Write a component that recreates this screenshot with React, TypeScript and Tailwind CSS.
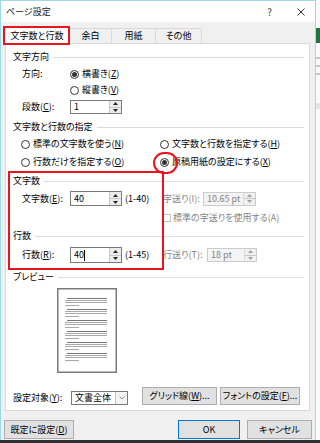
import React from "react";

const font = "font-['Noto_Sans_CJK_JP',sans-serif] [font-feature-settings:'palt']";

function Radio({ checked }: { checked?: boolean }) {
  return (
    <span className="w-[9px] h-[9px] rounded-full border border-[#333] bg-white flex items-center justify-center shrink-0">
      {checked && <span className="w-[5px] h-[5px] rounded-full bg-[#333]" />}
    </span>
  );
}

function Group({ label, className }: { label: string; className: string }) {
  return (
    <div className={className}>
      <span>{label}</span>
      <div className="flex-1 h-px bg-[#dcdcdc] ml-[4px]" />
    </div>
  );
}

function Spin({ disabled }: { disabled?: boolean }) {
  const c = disabled ? "#a0a0a0" : "#222";
  return (
    <div
      className={
        disabled
          ? "w-[12px] flex flex-col border-l border-[#dadada] bg-[#f0f0f0]"
          : "w-[12px] flex flex-col border-l border-[#c8c8c8] bg-[#ececec]"
      }
    >
      <div className="flex-1 flex items-center justify-center border-b border-[#c8c8c8]">
        <svg width="5" height="3" viewBox="0 0 5 3">
          <path d="M0 3 L2.5 0 L5 3 Z" fill={c} />
        </svg>
      </div>
      <div className="flex-1 flex items-center justify-center">
        <svg width="5" height="3" viewBox="0 0 5 3">
          <path d="M0 0 L2.5 3 L5 0 Z" fill={c} />
        </svg>
      </div>
    </div>
  );
}

function Input({ value, className, caret }: { value: string; className: string; caret?: boolean }) {
  return (
    <div className={"flex border border-[#7a7a7a] bg-white " + className}>
      <div className="flex-1 flex items-center pl-[3px]">
        {value}
        {caret && <span className="w-px h-[11px] bg-black" />}
      </div>
      <Spin />
    </div>
  );
}

function DisabledInput({ value, className }: { value: string; className: string }) {
  return (
    <div className={"flex border border-[#cccccc] bg-[#f4f4f4] text-[#838383] " + className}>
      <div className="flex-1 flex items-center pl-[3px]">{value}</div>
      <Spin disabled />
    </div>
  );
}

function PreviewPage() {
  const paras = [0, 1, 2, 3, 4, 5];
  return (
    <svg width="60" height="85" viewBox="0 0 60 85">
      <rect x="0.75" y="0.75" width="58.5" height="83.5" fill="#fff" stroke="#7a7a7a" strokeWidth="1.5" />
      {paras.map((i) => {
        const y = 10 + i * 11;
        return (
          <g key={i}>
            <rect x="10" y={y} width="40" height="1" fill="#777" />
            <rect x="8" y={y + 2} width="42" height="1" fill="#a8a8a8" />
            <rect x="8" y={y + 4} width="42" height="1" fill="#a8a8a8" />
            <rect x="8" y={y + 7} width="14" height="1" fill="#a8a8a8" />
          </g>
        );
      })}
    </svg>
  );
}

export default function App() {
  return (
    <div className={"w-[320px] h-[443px] flex flex-col overflow-hidden text-[9px] leading-[12px] text-black bg-white " + font}>
      <div className="flex h-[440px]">
        <div className="w-[316px] h-[440px] border-l border-t border-r border-[#9fd8e6] flex flex-col">
          {/* title bar */}
          <div className="h-[21px] bg-white flex items-center pl-[5px] shrink-0">
            <span className="text-[#222]">ページ設定</span>
            <span className="ml-auto text-[#444] text-[10px]">?</span>
            <svg className="ml-[25px] mr-[10px]" width="8" height="8" viewBox="0 0 8 8">
              <path d="M0.5 0.5 L7.5 7.5 M7.5 0.5 L0.5 7.5" stroke="#333" strokeWidth="1" />
            </svg>
          </div>

          {/* body */}
          <div className="flex-1 bg-[#f0f0f0] flex flex-col">
            {/* tabs */}
            <div className="relative flex items-end h-[17px] mt-[4px] pl-[3px]">
              <div className="relative z-10 w-[66px] h-[18px] -mb-px bg-white border-l border-t border-r border-[#d9d9d9] flex items-center justify-center">
                文字数と行数
              </div>
              <div className="w-[42px] h-[15px] border-t border-r border-[#d9d9d9] flex items-center justify-center">
                余白
              </div>
              <div className="w-[44px] h-[15px] border-t border-r border-[#d9d9d9] flex items-center justify-center">
                用紙
              </div>
              <div className="w-[46px] h-[15px] border-t border-r border-[#d9d9d9] flex items-center justify-center">
                その他
              </div>
              <div className="absolute left-[2px] top-0 w-[67px] h-[19px] border-2 border-[#e8141e] z-20" />
            </div>

            {/* panel */}
            <div className="relative ml-[4px] w-[305px] bg-white border border-[#d9d9d9] flex flex-col pb-[5px]">
              <Group label="文字方向" className="flex items-center h-[12px] mt-[7px] pl-[7px] pr-[5px]" />
              <div className="flex items-center h-[12px] mt-[5px] pl-[16px]">
                <span className="w-[48px]">方向:</span>
                <Radio checked />
                <span className="ml-[3px]">
                  横書き(<span className="underline">Z</span>)
                </span>
              </div>
              <div className="flex items-center h-[12px] mt-[4px] pl-[64px]">
                <Radio />
                <span className="ml-[3px]">
                  縦書き(<span className="underline">V</span>)
                </span>
              </div>
              <div className="flex items-center h-[14px] mt-[4px] pl-[16px]">
                <span className="w-[48px]">
                  段数(<span className="underline">C</span>):
                </span>
                <Input value="1" className="w-[52px] h-[14px]" />
              </div>

              <Group label="文字数と行数の指定" className="flex items-center h-[12px] mt-[7px] pl-[7px] pr-[5px]" />
              <div className="flex items-center h-[12px] mt-[5px] pl-[15px]">
                <div className="w-[139px] flex items-center">
                  <Radio />
                  <span className="ml-[3px]">
                    標準の文字数を使う(<span className="underline">N</span>)
                  </span>
                </div>
                <Radio />
                <span className="ml-[3px]">
                  文字数と行数を指定する(<span className="underline">H</span>)
                </span>
              </div>
              <div className="flex items-center h-[12px] mt-[6px] pl-[15px]">
                <div className="w-[139px] flex items-center">
                  <Radio />
                  <span className="ml-[3px]">
                    行数だけを指定する(<span className="underline">O</span>)
                  </span>
                </div>
                <Radio checked />
                <span className="ml-[3px]">
                  原稿用紙の設定にする(<span className="underline">X</span>)
                </span>
              </div>

              <Group label="文字数" className="flex items-center h-[12px] mt-[7px] pl-[7px] pr-[5px]" />
              <div className="flex items-center h-[15px] mt-[4px] pl-[16px]">
                <div className="w-[141px] flex items-center">
                  <span className="w-[48px]">
                    文字数(<span className="underline">E</span>):
                  </span>
                  <Input value="40" className="w-[52px] h-[15px]" />
                  <span className="ml-[3px]">(1-40)</span>
                </div>
                <span className="w-[40px] text-[#838383]">字送り(I):</span>
                <DisabledInput value="10.65 pt" className="w-[53px] h-[14px]" />
              </div>
              <div className="flex items-center h-[12px] mt-[6px] pl-[157px]">
                <span className="w-[8px] h-[8px] border border-[#c4c4c4] bg-white" />
                <span className="ml-[2px] text-[#838383]">標準の字送りを使用する(A)</span>
              </div>

              <Group label="行数" className="flex items-center h-[12px] mt-[6px] pl-[7px] pr-[5px]" />
              <div className="flex items-center h-[16px] mt-[5px] pl-[16px]">
                <div className="w-[141px] flex items-center">
                  <span className="w-[48px]">
                    行数(<span className="underline">R</span>):
                  </span>
                  <Input value="40" caret className="w-[52px] h-[16px]" />
                  <span className="ml-[3px]">(1-45)</span>
                </div>
                <span className="w-[44px] text-[#838383]">行送り(T):</span>
                <DisabledInput value="18 pt" className="w-[50px] h-[14px]" />
              </div>

              <Group label="プレビュー" className="flex items-center h-[12px] mt-[8px] pl-[7px] pr-[5px]" />
              <div className="mt-[5px] pl-[51px] flex">
                <PreviewPage />
              </div>

              <div className="flex items-end h-[18px] mt-[14px] pl-[7px]">
                <span className="w-[58px] mb-[1px]">
                  設定対象(<span className="underline">Y</span>):
                </span>
                <div className="w-[57px] h-[14px] border border-[#7a7a7a] bg-white flex">
                  <div className="flex-1 flex items-center pl-[3px]">文書全体</div>
                  <div className="w-[12px] border-l border-[#c8c8c8] bg-[#f4f4f4] flex items-center justify-center">
                    <svg width="6" height="4" viewBox="0 0 6 4">
                      <path d="M0.5 0.5 L3 3 L5.5 0.5" fill="none" stroke="#777" strokeWidth="0.8" />
                    </svg>
                  </div>
                </div>
                <div className="ml-[14px] w-[75px] h-[18px] bg-[#e1e1e1] border border-[#adadad] flex items-center justify-center">
                  グリッド線(<span className="underline">W</span>)...
                </div>
                <div className="ml-[3px] w-[80px] h-[18px] bg-[#e1e1e1] border border-[#adadad] flex items-center justify-center">
                  フォントの設定(<span className="underline">F</span>)...
                </div>
              </div>

              {/* annotations */}
              <div className="absolute left-[2px] top-[127px] w-[156px] h-[99px] border-2 border-[#e8141e]" />
              <div className="absolute left-[147px] top-[108px] w-[25px] h-[22px] rounded-full border-2 border-[#e8141e]" />
            </div>

            {/* dialog buttons */}
            <div className="flex h-[19px] mt-[9px] pl-[3px]">
              <div className="w-[70px] h-[19px] bg-[#e1e1e1] border border-[#adadad] flex items-center justify-center">
                既定に設定(<span className="underline">D</span>)
              </div>
              <div className="ml-[104px] w-[62px] h-[19px] bg-[#e1e1e1] border border-[#0078d7] flex items-center justify-center">
                OK
              </div>
              <div className="ml-[7px] w-[65px] h-[19px] bg-[#e1e1e1] border border-[#adadad] flex items-center justify-center">
                キャンセル
              </div>
            </div>
          </div>
        </div>

        {/* background window strip */}
        <div className="w-[4px] flex flex-col bg-[#f7fbfc]">
          <div className="h-[28px]" />
          <div className="h-[15px] bg-[#217346]" />
          <div className="h-[12px]" />
          <div className="h-[2px] bg-[#c8c8c8] mt-[2px]" />
          <div className="h-[2px] bg-[#c8c8c8] mt-[6px]" />
          <div className="h-[2px] bg-[#c8c8c8] mt-[6px]" />
          <div className="h-[6px] bg-[#e6e6e6] mt-[28px]" />
        </div>
      </div>
      <div className="h-[3px] bg-[#2b3036]" />
    </div>
  );
}
